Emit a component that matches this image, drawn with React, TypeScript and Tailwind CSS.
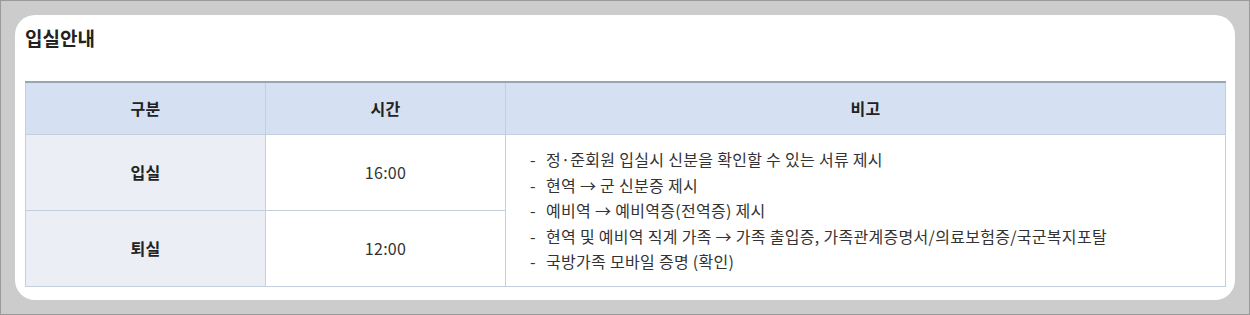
const remarks = [
  '정·준회원 입실시 신분을 확인할 수 있는 서류 제시',
  '현역 → 군 신분증 제시',
  '예비역 → 예비역증(전역증) 제시',
  '현역 및 예비역 직계 가족 → 가족 출입증, 가족관계증명서/의료보험증/국군복지포탈',
  '국방가족 모바일 증명 (확인)',
];

const rows = [
  { label: '입실', time: '16:00' },
  { label: '퇴실', time: '12:00' },
];

export default function App() {
  return (
    <div
      className="h-[315px] w-full border border-[#9a9a9a] bg-[#cccccc] p-[14px]"
      style={{ fontFamily: '"Noto Sans CJK KR", "Noto Sans", sans-serif' }}
    >
      <div className="h-[285px] rounded-[20px] bg-white px-[10px] pt-[9px]">
        <h2 className="text-[19px] leading-[28px] font-bold text-[#222]">입실안내</h2>
        <table className="mt-[29px] w-[1200px] table-fixed border-collapse text-[16px] tracking-[0.3px] text-[#333]">
          <colgroup>
            <col className="w-[240px]" />
            <col className="w-[240px]" />
            <col className="w-[720px]" />
          </colgroup>
          <thead>
            <tr className="h-[52px] border-t-2 border-[#97a5b8] bg-[#d5e1f2]">
              <th className="border border-t-0 border-[#c3cfdc] font-bold text-[#222]">구분</th>
              <th className="border border-t-0 border-[#c3cfdc] font-bold text-[#222]">시간</th>
              <th className="border border-t-0 border-[#c3cfdc] font-bold text-[#222]">비고</th>
            </tr>
          </thead>
          <tbody>
            {rows.map((row, i) => (
              <tr key={row.label} className="h-[76px]">
                <td className="border border-[#c3cfdc] bg-[#ebeef4] text-center font-bold text-[#222]">
                  {row.label}
                </td>
                <td className="border border-[#c3cfdc] text-center">{row.time}</td>
                {i === 0 && (
                  <td rowSpan={2} className="border border-[#c3cfdc] pl-[24px] align-middle">
                    <ul className="pt-[2px]">
                      {remarks.map((text) => (
                        <li key={text} className="flex leading-[25.4px]">
                          <span className="w-[16px] shrink-0">-</span>
                          <span>{text}</span>
                        </li>
                      ))}
                    </ul>
                  </td>
                )}
              </tr>
            ))}
          </tbody>
        </table>
      </div>
    </div>
  );
}
